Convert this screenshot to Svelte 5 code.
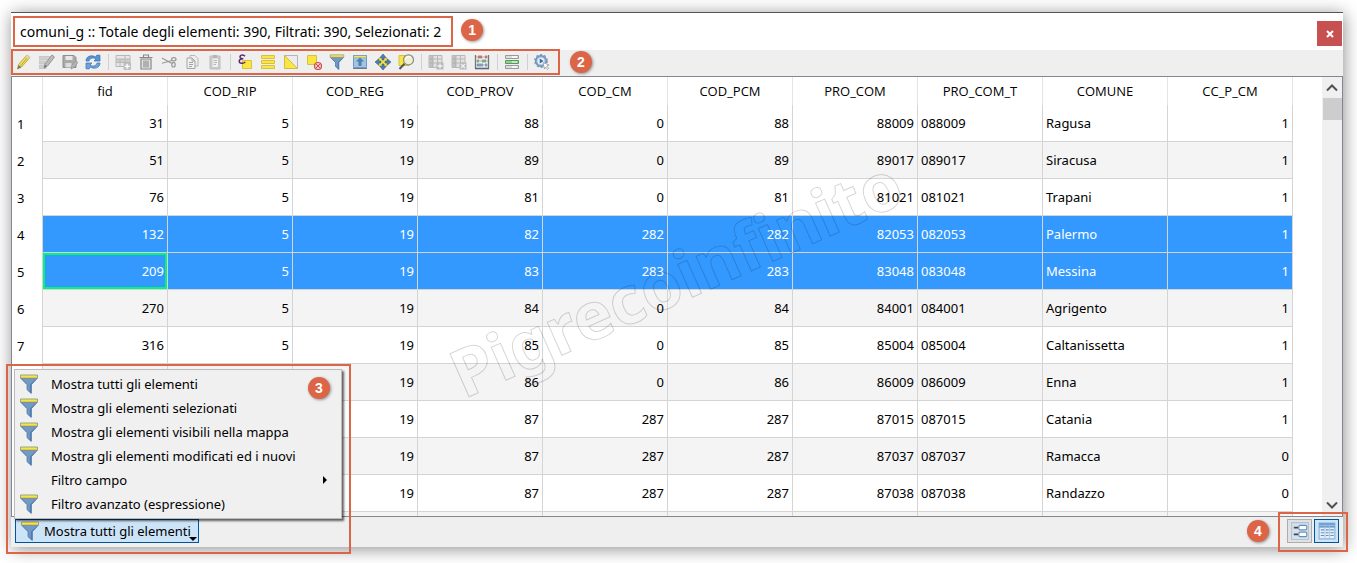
<script>
  const icons = {
    pencil: '<path d="M1.500 15l1-4.500L11 1l3 2.500-8.500 9.500z" fill="#f0dc58" stroke="#b39c2c" stroke-width=".8"/><path d="M4 12.500L12.500 2.500" stroke="#c6ac34"/><path d="M11 1l3 2.500-1.300 1.400-3-2.500z" fill="#d8d8c8"/><path d="M1.500 15l1-4 2.800 2.200z" fill="#777"/>',
    multiedit: '<path d="M0 2.500h11v3H0zM0 7h9v3H0zM0 11.500h7v3H0z" fill="#d0d0d0" stroke="#bdbdbd" stroke-width=".7"/><path d="M5 14l1-4L13 1l2.500 2-7 9z" fill="#bcbcbc" stroke="#8d8d8d" stroke-width=".9"/><path d="M5 14l1-3.500 2 1.700z" fill="#777"/>',
    save: '<path d="M1 1.500h11l2 2v10H1z" fill="#aaa" stroke="#8d8d8d"/><path d="M3.500 2h7v4h-7z" fill="#e7e7e7"/><path d="M3.500 9h6v4.500h-6z" fill="#ddd"/><path d="M9 15l1-4 4-4 2 1.500-4 5z" fill="#b5b5b5" stroke="#929292" stroke-width=".7"/>',
    reload: '<path d="M1 7C1 2 7 .5 10.500 3L12 1l3 .3V7H9l2-2C8 3 4.800 4 4 7z" fill="#5b93d2" stroke="#3871b2" stroke-width=".7"/><path d="M15 9c0 5-6 6.500-9.500 4L4 15l-3-.3V9h6l-2 2c3 2 6.200 1 7-2z" fill="#6da2dc" stroke="#3871b2" stroke-width=".7"/>',
    addrow: '<path d="M1 1.500h14v11H1zM1 5h14M1 8.500h14M5 5v7.500M10 1.500v11" fill="#e8e8e8" stroke="#b8b8b8"/><path d="M1 5h14v3.500H1z" fill="#bbb" opacity=".6"/><path d="M9 9h6.500v6.500H9z" fill="#c4c4c4" stroke="#b4b4b4" stroke-width=".7"/><path d="M12.200 9.800v5M9.800 12.300h5" stroke="#fff" stroke-width="1.300"/>',
    trash: '<path d="M3 5h10v10H3z" fill="#e3e3e3" stroke="#888" stroke-width="1.200"/><path d="M1.500 3.500h13M5.500 3V1h5v2M6 6.500v7M8 6.500v7M10 6.500v7" fill="none" stroke="#888" stroke-width="1.100"/>',
    cut: '<path d="M1 4l10 5.500M1 9.200L11 6.500" stroke="#999" stroke-width="1.100"/><ellipse cx="12.800" cy="5.200" rx="2.200" ry="1.600" fill="none" stroke="#999" stroke-width="1.200"/><ellipse cx="12.500" cy="10.700" rx="1.700" ry="2.300" fill="none" stroke="#999" stroke-width="1.200"/>',
    copy: '<path d="M6 1.500h5L14 4.500V12H6z" fill="#eee" stroke="#b8b8b8"/><path d="M3 4h5l3 3v7.500H3z" fill="#f1f1f1" stroke="#a4a4a4"/><path d="M8 4v3h3M5 8.500h4M5 10.500h4M5 12.500h3" fill="none" stroke="#a4a4a4"/>',
    paste: '<path d="M3 2h10v13H3z" fill="#cfcfcf" stroke="#bbb"/><path d="M5 4h6.500v9.500H5z" fill="#f0f0f0" stroke="#c0c0c0" stroke-width=".8"/><path d="M6 1h4v3H6z" fill="#b4b4b4"/><path d="M6.500 6.500H10M6.500 8.500H10M6.500 10.500H9" stroke="#b8b8b8"/>',
    expression: '<path d="M5.500 6.500h9v8h-9z" fill="#fbe541" stroke="#d8c043"/><path d="M8 2.200C6-.2 2 1.300 3.300 3.700 4 4.800 6.300 4.700 6.300 4.700S2.500 4.500 2.200 7c-.2 2.800 4.500 3 6 .8" fill="none" stroke="#5b2a69" stroke-width="1.500"/>',
    selectall: '<path d="M1.500 1.500h13v3h-13zM1.500 6.500h13v3h-13zM1.500 11.500h13v3h-13z" fill="#fbe541" stroke="#d8c043"/>',
    invert: '<path d="M1.500 1.500h13v13z" fill="#ececec" stroke="#b4b4b4"/><path d="M1.500 1.500v13h13z" fill="#fbe541" stroke="#d3bc45"/>',
    deselect: '<path d="M1.500 1.500h9v9h-9z" fill="#fbe541" stroke="#d8c043"/><circle cx="12" cy="12" r="3.500" fill="#f5caca" stroke="#d34d4d" stroke-width="1.200"/><path d="M9.800 9.800l4.400 4.400M14.200 9.800l-4.400 4.400" stroke="#d34d4d"/>',
    funnel: '<path d="M1.500 3.500h13L9.800 8.500v7L6.500 12.500v-4z" fill="#7399c5" stroke="#4f79a9" stroke-width=".8"/><path d="M8.700 8.500v5.800l1 .8V8.500l4-4.500z" fill="#4e7bac"/><path d="M1.200.8h13.600v2.500H1.200z" fill="#f8e447" stroke="#8f9a86" stroke-width=".7"/>',
    movetop: '<path d="M1.500 1.500h13v12h-13z" fill="#c5d9ec" stroke="#6c9bcb"/><path d="M1.500 1.500h13v2.500h-13z" fill="#f2e36a" stroke="#7799ad" stroke-width=".8"/><path d="M2 6h12M2 8h12M2 10h12M2 12h12" stroke="#88add2"/><path d="M8 3.500l4 4h-2.500V12h-3V7.500H4z" fill="#4a82ba"/><path d="M1 14.500h14" stroke="#777"/>',
    pan: '<path d="M4 4h8v8H4z" fill="#fbe541" stroke="#cdb334"/><path d="M8 0l3 3.500H9V6H7V3.500H5zM8 16l3-3.500H9V10H7v2.500H5zM0 8l3.500-3v2H6v2H3.500v2zM16 8l-3.500-3v2H10v2h2.500v2z" fill="#507fae" stroke="#365f8c" stroke-width=".6"/>',
    zoom: '<path d="M1 1.500h10v10H1z" fill="#fbe541" stroke="#d8c043"/><path d="M6.500 9.800L1.500 15" stroke="#555" stroke-width="2"/><circle cx="10.500" cy="5.800" r="5" fill="#f0efd6" stroke="#8f8f84" stroke-width="1.200"/><path d="M8 4.500C9 2.500 11 2.500 12 3" stroke="#fff" fill="none" stroke-width="1.200"/>',
    addcol: '<path d="M1 1.500h13v12H1zM5 1.500v12M9.500 1.500v12M1 5h13M1 9h13" fill="#e2e2e2" stroke="#b8b8b8"/><path d="M1.500 2H5v11H1.500z" fill="#aaa" opacity=".6"/><path d="M8.500 8.500h7v7h-7z" fill="#b9b9b9"/><path d="M12 9.500v5M9.500 12h5" stroke="#f1f1f1" stroke-width="1.300"/>',
    delcol: '<path d="M1 1.500h13v12H1zM5 1.500v12M9.500 1.500v12M1 5h13M1 9h13" fill="#e2e2e2" stroke="#b8b8b8"/><path d="M1.500 2H5v11H1.500z" fill="#aaa" opacity=".6"/><path d="M8.500 8.500h7v7h-7z" fill="#b9b9b9"/><path d="M10 10l4 4M14 10l-4 4" stroke="#f1f1f1" stroke-width="1.300"/>',
    abacus: '<path d="M1.500 1v13.500M14.500 1v13.500" stroke="#777" stroke-width="1.300"/><path d="M1 14.500h14" stroke="#666" stroke-width="1.600"/><path d="M2 3h12M2 7h12M2 11h12" stroke="#999" stroke-width=".8"/><path d="M5 1.500v3M7 1.500v3M12 1.500v3" stroke="#ce5252" stroke-width="1.500"/><path d="M4 5.500v3M9 5.500v3M11 5.500v3" stroke="#5aa56a" stroke-width="1.500"/><path d="M4 9.500v3M6 9.500v3M8 9.500v3M12 9.500v3" stroke="#5f8dbd" stroke-width="1.500"/>',
    format: '<path d="M1.500 1.500h13v3h-13zM1.500 11.500h13v3h-13z" fill="#dedede" stroke="#999"/><path d="M1.500 6.500h13v3h-13z" fill="#96ce94" stroke="#579b5a"/><path d="M8 3h5M8 13h5" stroke="#fff" stroke-width="1.300"/><path d="M8 8h5" stroke="#dff5da" stroke-width="1.300"/>',
    action: '<circle cx="7" cy="7" r="5.400" fill="#8db4df" stroke="#668aaf" stroke-width="1.200"/><circle cx="7" cy="7" r="6.300" fill="none" stroke="#8798ab" stroke-width="1.300" stroke-dasharray="2 2"/><circle cx="7" cy="7" r="3.600" fill="#e8f0fa"/><path d="M5.700 4.500L9.500 7l-3.800 2.500z" fill="#376ba3"/><path d="M9 8.500l6 2.500-2.300 1 2 2.500-1 1-2.200-2.500-1 2z" fill="#fff" stroke="#999" stroke-width=".8"/>',
    form: '<path d="M.5 .5h15v15H.5z" fill="#d5e1ed" stroke="#adc4db"/><path d="M2.500 5h4M2.500 11h4" stroke="#444" stroke-width="1.500"/><rect x="7" y="3" width="7" height="4" rx="1" fill="#fff" stroke="#6690bc"/><rect x="7" y="9" width="7" height="4" rx="1" fill="#fff" stroke="#6690bc"/>',
    table: '<path d="M1 1h14v14H1z" fill="#e3effa" stroke="#8eb2d6"/><path d="M1 1h14v4H1z" fill="#6c9bce"/><path d="M1 3h14" stroke="#a4c5e5" stroke-width=".8"/><path d="M2.500 7h3M2.500 9.500h3M2.500 12h3M7 7h2.500M7 9.500h2.500M7 12h2.500M11 7h3M11 9.500h3M11 12h3" stroke="#6593c3"/><path d="M6.200 2v12.500M10.300 2v12.500" stroke="#9bbedf" stroke-width=".7"/>',
  };

  const groups = [
    [['pencil', 'Modifica'], ['multiedit', 'Modifica multipla'], ['save', 'Salva'], ['reload', 'Ricarica']],
    [['addrow', 'Aggiungi elemento'], ['trash', 'Elimina'], ['cut', 'Taglia'], ['copy', 'Copia'], ['paste', 'Incolla']],
    [['expression', 'Seleziona con espressione'], ['selectall', 'Seleziona tutto'], ['invert', 'Inverti selezione'], ['deselect', 'Deseleziona'], ['funnel', 'Filtra'], ['movetop', 'Sposta in cima'], ['pan', 'Sposta mappa'], ['zoom', 'Zoom alla selezione']],
    [['addcol', 'Nuovo campo'], ['delcol', 'Elimina campo'], ['abacus', 'Calcolatore di campi']],
    [['format', 'Formattazione condizionale']],
    [['action', 'Azioni']],
  ];

  const columns = ['fid', 'COD_RIP', 'COD_REG', 'COD_PROV', 'COD_CM', 'COD_PCM', 'PRO_COM', 'PRO_COM_T', 'COMUNE', 'CC_P_CM'];
  const textColumns = ['PRO_COM_T', 'COMUNE'];
  const rows = [
    [31, 5, 19, 88, 0, 88, 88009, '088009', 'Ragusa', 1],
    [51, 5, 19, 89, 0, 89, 89017, '089017', 'Siracusa', 1],
    [76, 5, 19, 81, 0, 81, 81021, '081021', 'Trapani', 1],
    [132, 5, 19, 82, 282, 282, 82053, '082053', 'Palermo', 1],
    [209, 5, 19, 83, 283, 283, 83048, '083048', 'Messina', 1],
    [270, 5, 19, 84, 0, 84, 84001, '084001', 'Agrigento', 1],
    [316, 5, 19, 85, 0, 85, 85004, '085004', 'Caltanissetta', 1],
    ['', '', 19, 86, 0, 86, 86009, '086009', 'Enna', 1],
    ['', '', 19, 87, 287, 287, 87015, '087015', 'Catania', 1],
    ['', '', 19, 87, 287, 287, 87037, '087037', 'Ramacca', 0],
    ['', '', 19, 87, 287, 287, 87038, '087038', 'Randazzo', 0],
    ['', '', '', '', '', '', '', '', '', ''],
  ];

  const selected = [3, 4];
  const current = 4;

  const menu = [
    { label: 'Mostra tutti gli elementi', icon: true },
    { label: 'Mostra gli elementi selezionati', icon: true },
    { label: 'Mostra gli elementi visibili nella mappa', icon: true },
    { label: 'Mostra gli elementi modificati ed i nuovi', icon: true },
    { label: 'Filtro campo', icon: false },
    { label: 'Filtro avanzato (espressione)', icon: true },
  ];
</script>

{#snippet icon(name)}
  <svg class="icon" viewBox="0 0 16 16" aria-hidden="true">{@html icons[name]}</svg>
{/snippet}

<div class="page">
  <main class="window">
    <header class="titlebar">
      <h1>comuni_g :: Totale degli elementi: 390, Filtrati: 390, Selezionati: 2</h1>
      <span class="marker">1</span>
      <button class="close" aria-label="Chiudi">
        <svg viewBox="0 0 8 8" aria-hidden="true"><path d="M1 1l6 6M7 1L1 7" stroke="#fff" stroke-width="2" /></svg>
      </button>
    </header>

    <div class="toolbar">
      <div class="tools" role="toolbar">
        {#each groups as group, g}
          {#if g > 0}<span class="sep"></span>{/if}
          {#each group as [name, label]}
            <button class="tool" aria-label={label}>{@render icon(name)}</button>
          {/each}
        {/each}
      </div>
      <span class="marker">2</span>
    </div>

    <section class="grid">
      <div class="scroller">
        <table>
          <thead>
            <tr>
              <th class="rownum"></th>
              {#each columns as c}<th scope="col">{c}</th>{/each}
            </tr>
          </thead>
          <tbody>
            {#each rows as row, i}
              <tr class:selected={selected.includes(i)}>
                <th class="rownum" scope="row">{i < 7 ? i + 1 : ''}</th>
                {#each row as cell, j}
                  <td class:text={textColumns.includes(columns[j])} class:current={i === current && j === 0}>{cell}</td>
                {/each}
              </tr>
            {/each}
          </tbody>
        </table>
        <svg class="watermark" viewBox="0 0 480 260" aria-hidden="true">
          <text x="0" y="0" transform="translate(24 240) rotate(-24)">Pigrecoinfinito</text>
        </svg>
      </div>
      <div class="scrollbar">
        <svg viewBox="0 0 12 8" aria-hidden="true"><path d="M1 6.500l5-5 5 5" /></svg>
        <span class="thumb"></span>
        <svg class="down" viewBox="0 0 12 8" aria-hidden="true"><path d="M1 1.500l5 5 5-5" /></svg>
      </div>
    </section>

    <footer class="status">
      <div class="filter">
        <button class="filter-button">
          {@render icon('funnel')}
          <span>Mostra tutti gli elementi</span>
          <i class="caret"></i>
        </button>
        <div class="menu" role="menu">
          {#each menu as item}
            <button class="item" role="menuitem">
              <span class="slot">{#if item.icon}{@render icon('funnel')}{/if}</span>
              <span>{item.label}</span>
              {#if !item.icon}<i class="arrow"></i>{/if}
            </button>
          {/each}
          <span class="marker in-menu">3</span>
        </div>
        <div class="outline filter-outline"></div>
      </div>
      <span class="marker">4</span>
      <div class="views">
        <button class="view" aria-label="Vista modulo">{@render icon('form')}</button>
        <button class="view active" aria-label="Vista tabella">{@render icon('table')}</button>
        <div class="outline views-outline"></div>
      </div>
    </footer>
  </main>
</div>

<style>
  :global(body) {
    margin: 0;
    background: #fff;
  }
  .page {
    --accent: #dc6547;
    --line: #d4d4d4;
    box-sizing: border-box;
    height: 100vh;
    padding: 12px 14px 16px 11px;
    overflow: hidden;
    font: 13px/20px "Noto Sans", "Open Sans", sans-serif;
    color: #000;
  }
  button {
    margin: 0;
    padding: 0;
    border: 0;
    background: none;
    font: inherit;
    color: inherit;
  }
  .window {
    box-sizing: border-box;
    display: flex;
    flex-direction: column;
    height: 100%;
    border-top: 1px solid #555;
    background: #efefef;
    box-shadow: 1px 2px 16px rgba(0, 0, 0, 0.45);
  }
  .icon {
    display: block;
    width: 16px;
    height: 16px;
  }
  .marker {
    flex: none;
    width: 22px;
    height: 22px;
    border-radius: 50%;
    background: var(--accent);
    box-shadow: 1px 1px 3px rgba(0, 0, 0, 0.4);
    color: #fff;
    font: bold 14px/22px "Liberation Sans", sans-serif;
    text-align: center;
  }

  .titlebar {
    box-sizing: border-box;
    display: flex;
    align-items: flex-start;
    gap: 8px;
    flex: none;
    height: 34px;
    padding: 3px 1px 0 2px;
    background: #fff;
  }
  .titlebar .marker {
    margin-top: 3px;
  }
  h1 {
    margin: 0;
    padding: 3px 10px 3px 5px;
    border: 2px solid var(--accent);
    font-size: 14px;
    line-height: 21px;
    font-weight: 400;
    white-space: nowrap;
  }
  .close {
    display: grid;
    place-items: center;
    width: 25px;
    height: 25px;
    margin: 5px 0 0 auto;
    background: #c75050;
  }
  .close svg {
    width: 8px;
    height: 8px;
  }

  .toolbar {
    box-sizing: border-box;
    display: flex;
    align-items: center;
    gap: 10px;
    flex: none;
    height: 29px;
    padding: 2px 0 1px;
    background: linear-gradient(#fff 3px, #efefef 3px);
  }
  .tools {
    display: flex;
    align-items: center;
    gap: 7px;
    height: 22px;
    padding: 0 8px 0 3px;
    border: 2px solid var(--accent);
  }
  .tool {
    width: 16px;
    height: 16px;
  }
  .sep {
    width: 1px;
    height: 16px;
    margin-right: -1px;
    background: #d0d0d0;
  }

  .grid {
    display: flex;
    flex: 1;
    min-height: 0;
    border: 1px solid #828790;
    background: #fff;
  }
  .scroller {
    position: relative;
    flex: 1;
    min-width: 0;
    overflow: hidden;
  }
  table {
    width: 1281px;
    border-collapse: separate;
    border-spacing: 0;
    table-layout: fixed;
  }
  th,
  td {
    box-sizing: border-box;
    width: 125px;
    height: 37px;
    padding: 0 3px;
    border-right: 1px solid var(--line);
    border-bottom: 1px solid var(--line);
    font-weight: 400;
    text-align: right;
    white-space: nowrap;
  }
  thead th {
    height: 28px;
    border-color: #e5e5e5;
    border-bottom: 0;
    font-family: "Open Sans", sans-serif;
    text-align: center;
  }
  th.rownum {
    width: 31px;
    padding: 0 0 0 5px;
    border-bottom: 0;
    text-align: left;
  }
  td.text {
    text-align: left;
  }
  tbody tr:nth-child(even) td {
    background: #f4f4f4;
  }
  tbody tr.selected td {
    background: #3399ff;
    color: #fff;
  }
  td.current {
    box-shadow: inset 0 0 0 2px #00f57a;
  }
  .watermark {
    position: absolute;
    left: 428px;
    top: 82px;
    width: 480px;
    height: 260px;
    overflow: visible;
    pointer-events: none;
  }
  .watermark text {
    fill: none;
    stroke: #000;
    stroke-opacity: 0.17;
    font: bold 66px "Noto Sans", sans-serif;
  }
  .scrollbar {
    display: flex;
    flex-direction: column;
    align-items: center;
    flex: none;
    width: 20px;
    padding: 7px 0;
    background: #f0f0f0;
  }
  .scrollbar svg {
    width: 12px;
    height: 8px;
  }
  .scrollbar path {
    fill: none;
    stroke: #505050;
    stroke-width: 2;
  }
  .thumb {
    width: 19px;
    height: 22px;
    margin-top: 6px;
    background: #cdcdcd;
  }
  .down {
    margin-top: auto;
  }

  .status {
    box-sizing: border-box;
    display: flex;
    align-items: center;
    gap: 18px;
    flex: none;
    height: 30px;
    padding: 0 4px 2px;
  }
  .filter {
    position: relative;
    margin-right: auto;
  }
  .filter-button {
    display: flex;
    align-items: center;
    gap: 4px;
    height: 24px;
    padding: 0 7px 0 4px;
    border: 1px solid #00549a;
    background: #cce4f7;
    white-space: nowrap;
  }
  .filter-button .icon,
  .slot .icon {
    width: 20px;
    height: 20px;
  }
  .caret {
    position: absolute;
    right: 2px;
    bottom: 2px;
    border: 4px solid transparent;
    border-top-color: #000;
    border-bottom: 0;
  }
  .menu {
    position: absolute;
    left: -1px;
    bottom: 100%;
    box-sizing: border-box;
    width: 328px;
    padding: 2px;
    border: 1px solid #bbb;
    background: #f0f0f0;
    box-shadow: 2px 2px 2px rgba(0, 0, 0, 0.6);
  }
  .item {
    display: flex;
    align-items: center;
    gap: 12px;
    width: 100%;
    height: 24px;
    padding: 0 12px 0 2px;
    white-space: nowrap;
  }
  .slot {
    width: 20px;
  }
  .arrow {
    margin-left: auto;
    border: 4px solid transparent;
    border-left-color: #000;
    border-right: 0;
  }
  .marker.in-menu {
    position: absolute;
    right: 11px;
    top: 7px;
  }
  .outline {
    position: absolute;
    border: 2px solid var(--accent);
    pointer-events: none;
  }
  .filter-outline {
    box-sizing: border-box;
    left: -9px;
    bottom: -11px;
    width: 345px;
    height: 190px;
  }
  .views {
    position: relative;
    display: flex;
    gap: 2px;
  }
  .view {
    box-sizing: border-box;
    display: grid;
    place-items: center;
    width: 25px;
    height: 24px;
    border: 1px solid #adadad;
    background: #e1e1e1;
  }
  .view .icon {
    width: 18px;
    height: 18px;
  }
  .view.active {
    border-color: #00549a;
    background: #cce4f7;
  }
  .views-outline {
    inset: -7px -9px -9px;
  }
</style>
